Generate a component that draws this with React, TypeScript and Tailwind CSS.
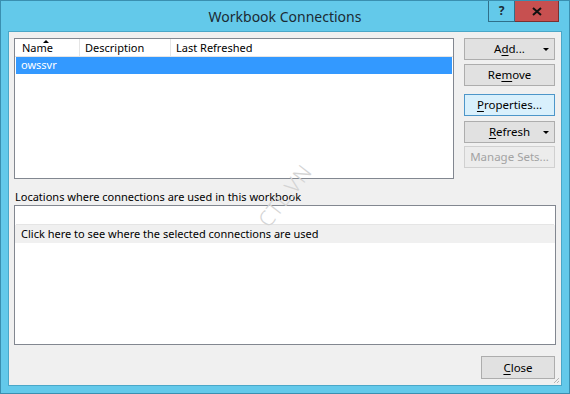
import { useState } from 'react';

const font = { fontFamily: '"Segoe UI", "Noto Sans", "Open Sans", sans-serif' };

function Btn({
  label,
  u,
  rest,
  pre = '',
  drop,
  hot,
  disabled,
}: {
  label?: string;
  pre?: string;
  u?: string;
  rest?: string;
  drop?: boolean;
  hot?: boolean;
  disabled?: boolean;
}) {
  const base = 'relative h-[22px] w-[91px] border text-[11.5px] flex items-center justify-center';
  const tone = disabled
    ? 'border-[#d0d0d0] bg-[#ececec] text-[#a3a3a3]'
    : hot
      ? 'border-[#4d96c9] bg-[#d9f0fc] text-black'
      : 'border-[#adadad] bg-[#e1e1e1] text-black';
  return (
    <button type="button" className={`${base} ${tone}`}>
      <span>
        {pre}
        {u ? <span className="underline underline-offset-2">{u}</span> : null}
        {rest}
        {label}
      </span>
      {drop ? (
        <span className="absolute right-[5px] top-[9px] w-0 h-0 border-l-[3px] border-r-[3px] border-t-[3px] border-l-transparent border-r-transparent border-t-black" />
      ) : null}
    </button>
  );
}

export default function App() {
  const [sel] = useState(0);
  return (
    <div
      className="w-[570px] h-[394px] bg-[#63c9ea] border border-[#3a8fb0] flex flex-col relative overflow-hidden"
      style={font}
    >
      <div className="h-[30px] shrink-0 flex items-center justify-center text-[14px] text-[#1b2a33]">
        Workbook Connections
      </div>
      <div className="absolute top-0 right-[10px] flex">
        <div className="w-[27px] h-[21px] border border-[#2f6f8a] border-t-0 bg-[#63c9ea] flex items-center justify-center text-[12px] font-bold text-[#1b2a33]">
          ?
        </div>
        <div className="w-[44px] h-[21px] border border-[#7a3030] border-t-0 border-l-0 bg-[#c75050] flex items-center justify-center">
          <svg width="10" height="9" viewBox="0 0 10 9">
            <path d="M1 1 L9 8 M9 1 L1 8" stroke="#111" strokeWidth="2" />
          </svg>
        </div>
      </div>

      <div className="mx-[7px] mb-[7px] flex-1 bg-[#f0f0f0] border border-[#4aa7c8] flex flex-col pl-[5px] pr-[6px] pt-[6px] relative">
        <div className="flex gap-[10px]">
          <div className="w-[440px] h-[141px] bg-white border border-[#828790] flex flex-col">
            <div className="h-[18px] flex text-[11px] text-black border-b border-[#e5e5e5]">
              <div className="w-[65px] pl-[7px] border-r border-[#e5e5e5] relative leading-[18px]">
                Name
                <span className="absolute left-[28px] top-[1px] w-0 h-0 border-l-[3px] border-r-[3px] border-b-[3px] border-l-transparent border-r-transparent border-b-black" />
              </div>
              <div className="w-[91px] pl-[5px] border-r border-[#e5e5e5] leading-[18px]">Description</div>
              <div className="flex-1 pl-[5px] leading-[18px]">Last Refreshed</div>
            </div>
            <div
              className={`h-[17px] mx-[1px] text-[11px] leading-[16px] pl-[5px] ${sel === 0 ? 'bg-[#3399ff] text-white' : ''}`}
            >
              owssvr
            </div>
          </div>
          <div className="flex flex-col">
            <Btn pre="A" u="d" rest="d..." drop />
            <div className="h-[4px]" />
            <Btn pre="Re" u="m" rest="ove" />
            <div className="h-[8px]" />
            <Btn u="P" rest="roperties..." hot />
            <div className="h-[5px]" />
            <Btn u="R" rest="efresh" drop />
            <div className="h-[3px]" />
            <Btn label="Manage Sets..." disabled />
          </div>
        </div>

        <div className="mt-[10px] text-[11px] text-black leading-[16px] pl-[1px]">
          Locations where connections are used in this workbook
        </div>
        <div className="w-[542px] h-[140px] bg-white border border-[#828790] flex flex-col">
          <div className="h-[18px] border-b border-[#e5e5e5] mx-[1px] mt-[1px]" />
          <div className="h-[18px] bg-[#f0f0f0] text-[11px] leading-[18px] pl-[6px] text-black">
            Click here to see where the selected connections are used
          </div>
        </div>

        <div className="flex justify-end mt-[11px]">
          <button
            type="button"
            className="w-[74px] h-[23px] border border-[#adadad] bg-[#e1e1e1] text-[11.5px] text-black"
          >
            <span className="underline underline-offset-2">C</span>lose
          </button>
        </div>

        <div className="absolute right-[1px] bottom-[1px]">
          <svg width="8" height="8" viewBox="0 0 8 8">
            <path d="M7 2 L2 7 M7 5 L5 7" stroke="#b5b5b5" strokeWidth="1" />
          </svg>
        </div>

        <div className="absolute left-[240px] top-[148px] -rotate-[52deg] text-[21px] font-light tracking-[1px] text-[#d4d4d4] pointer-events-none select-none">
          CTL.VN
        </div>
      </div>
    </div>
  );
}
